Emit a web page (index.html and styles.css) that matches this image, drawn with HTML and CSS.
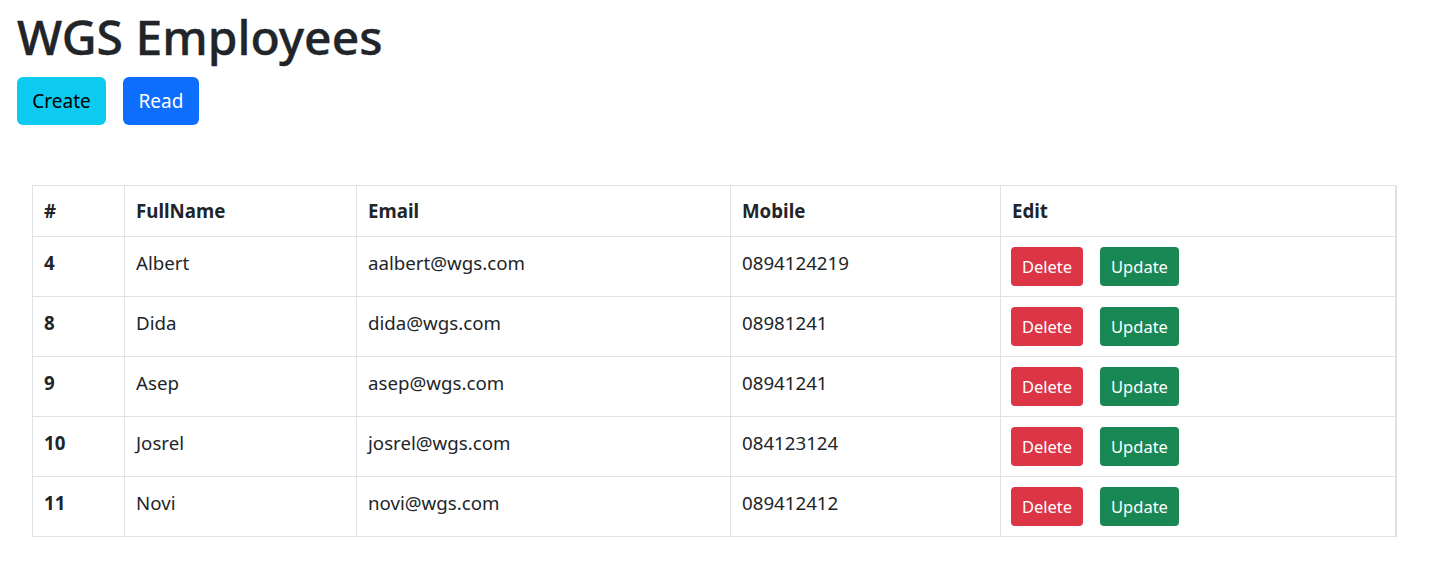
FILE: index.html
```html
<!DOCTYPE html>
<html lang="en">
<head>
<meta charset="utf-8">
<title>WGS Employees</title>
<link rel="stylesheet" href="styles.css">
</head>
<body>
<div class="page">
  <h1 class="title">WGS Employees</h1>
  <div class="actions">
    <button class="btn btn-info">Create</button>
    <button class="btn btn-primary">Read</button>
  </div>
  <div class="table-wrap">
    <table class="table">
      <thead>
        <tr><th class="c-id">#</th><th class="c-name">FullName</th><th class="c-email">Email</th><th class="c-mobile">Mobile</th><th class="c-edit">Edit</th></tr>
      </thead>
      <tbody>
        <tr><th>4</th><td>Albert</td><td>aalbert@wgs.com</td><td>0894124219</td><td class="edit"><button class="sbtn del">Delete</button><button class="sbtn upd">Update</button></td></tr>
        <tr><th>8</th><td>Dida</td><td>dida@wgs.com</td><td>08981241</td><td class="edit"><button class="sbtn del">Delete</button><button class="sbtn upd">Update</button></td></tr>
        <tr><th>9</th><td>Asep</td><td>asep@wgs.com</td><td>08941241</td><td class="edit"><button class="sbtn del">Delete</button><button class="sbtn upd">Update</button></td></tr>
        <tr><th>10</th><td>Josrel</td><td>josrel@wgs.com</td><td>084123124</td><td class="edit"><button class="sbtn del">Delete</button><button class="sbtn upd">Update</button></td></tr>
        <tr><th>11</th><td>Novi</td><td>novi@wgs.com</td><td>089412412</td><td class="edit"><button class="sbtn del">Delete</button><button class="sbtn upd">Update</button></td></tr>
      </tbody>
    </table>
  </div>
</div>
</body>
</html>
```
FILE: styles.css
```css
* { box-sizing: border-box; }
html, body { margin: 0; padding: 0; background: #fff; }
body {
  font-family: "Noto Sans", "Open Sans", sans-serif;
  color: #212529;
  font-size: 18.7px;
  line-height: 30px;
}
.page { padding: 0 17px; }
.title {
  margin: 0;
  padding-top: 8px;
  font-size: 48px;
  font-weight: 500;
  line-height: 1.2;
  height: 77px;
  -webkit-text-stroke: 0.4px #212529;
}
.actions { display: flex; gap: 17px; }
.btn {
  border: 0;
  border-radius: 6px;
  height: 48px;
  padding: 0;
  font-family: inherit;
  font-size: 19px;
  line-height: 30px;
  cursor: pointer;
}
.btn-info { background: #0dcaf0; color: #000; width: 89px; }
.btn-primary { background: #0d6efd; color: #fff; width: 76px; }
.table-wrap { padding: 60px 0 0 15px; }
.table {
  width: 1364px;
  border-collapse: collapse;
  table-layout: fixed;
  border: 1px solid #dee2e6;
  box-shadow: 1px 0 0 #dee2e6;
}
.table th, .table td {
  border: 1px solid #dee2e6;
  padding: 11px 11px 9px;
  text-align: left;
  vertical-align: top;
  font-size: 18.7px;
  line-height: 30px;
}
.table thead tr { height: 51px; }
.table thead th { font-weight: 700; padding-top: 10px; padding-bottom: 9px; }
.table tbody th { font-weight: 700; }
.table tbody tr { height: 60px; }
.table td.edit { padding: 10px 10px 9px 10px; }
.c-id { width: 92px; }
.c-name { width: 232px; }
.c-email { width: 374px; }
.c-mobile { width: 270px; }
.sbtn {
  border: 0;
  border-radius: 4px;
  height: 39px;
  color: #fff;
  font-family: inherit;
  font-size: 16.5px;
  padding: 0;
  vertical-align: top;
}
.del { background: #dc3545; width: 72px; margin-right: 17px; }
.upd { background: #198754; width: 79px; }
```
